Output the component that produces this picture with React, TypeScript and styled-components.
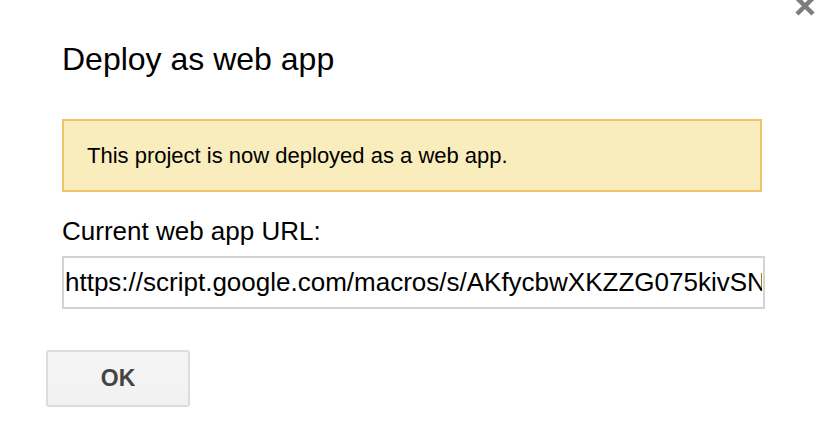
import styled, { createGlobalStyle } from "styled-components";

const GlobalStyle = createGlobalStyle`
  body {
    margin: 0;
    background: #fff;
    font-family: "Liberation Sans", Arial, Helvetica, sans-serif;
    color: #000;
  }
`;

const Dialog = styled.div`
  position: relative;
  width: 836px;
  height: 444px;
  overflow: hidden;
  background: #fff;
`;

const Close = styled.button`
  position: absolute;
  top: -6px;
  left: 793px;
  width: 24px;
  height: 24px;
  padding: 0;
  border: none;
  background: transparent;
  cursor: pointer;
  color: #7d7d7d;
`;

const Body = styled.div`
  display: flex;
  flex-direction: column;
  padding: 41px 71px 0 62px;
`;

const Title = styled.h1`
  margin: 0;
  font-size: 32px;
  line-height: 36px;
  font-weight: normal;
`;

const Notice = styled.div`
  margin: 42px 3px 0 0;
  border: 2px solid #f0c36d;
  background: #f9edbe;
  padding: 22px 23px;
  font-size: 22px;
  line-height: 25px;
`;

const FieldLabel = styled.label`
  margin-top: 24px;
  font-size: 26px;
  line-height: 30px;
`;

const UrlInput = styled.input`
  box-sizing: border-box;
  margin-top: 10px;
  width: 100%;
  height: 53px;
  border: 2px solid #d3d3d3;
  padding: 0 1px;
  font-family: inherit;
  font-size: 26px;
  color: #000;
  outline: none;
  background: #fff;
`;

const Footer = styled.div`
  display: flex;
  padding: 41px 0 0 46px;
`;

const OkButton = styled.button`
  box-sizing: border-box;
  width: 144px;
  height: 57px;
  border: 2px solid #dcdcdc;
  border-radius: 3px;
  background: linear-gradient(#f5f5f5, #f1f1f1);
  font-family: inherit;
  font-size: 23px;
  font-weight: bold;
  color: #444;
  cursor: pointer;
`;

const url =
  "https://script.google.com/macros/s/AKfycbwXKZZG075kivSNq3Lr8WbT2xPzY/exec";

export default function App() {
  return (
    <Dialog>
      <GlobalStyle />
      <Close aria-label="Close">
        <svg width="24" height="24" viewBox="0 0 24 24">
          <path
            d="M4 4 L20 20 M20 4 L4 20"
            stroke="currentColor"
            strokeWidth="4.5"
            strokeLinecap="butt"
          />
        </svg>
      </Close>
      <Body>
        <Title>Deploy as web app</Title>
        <Notice>This project is now deployed as a web app.</Notice>
        <FieldLabel htmlFor="url">Current web app URL:</FieldLabel>
        <UrlInput id="url" readOnly defaultValue={url} />
      </Body>
      <Footer>
        <OkButton>OK</OkButton>
      </Footer>
    </Dialog>
  );
}
